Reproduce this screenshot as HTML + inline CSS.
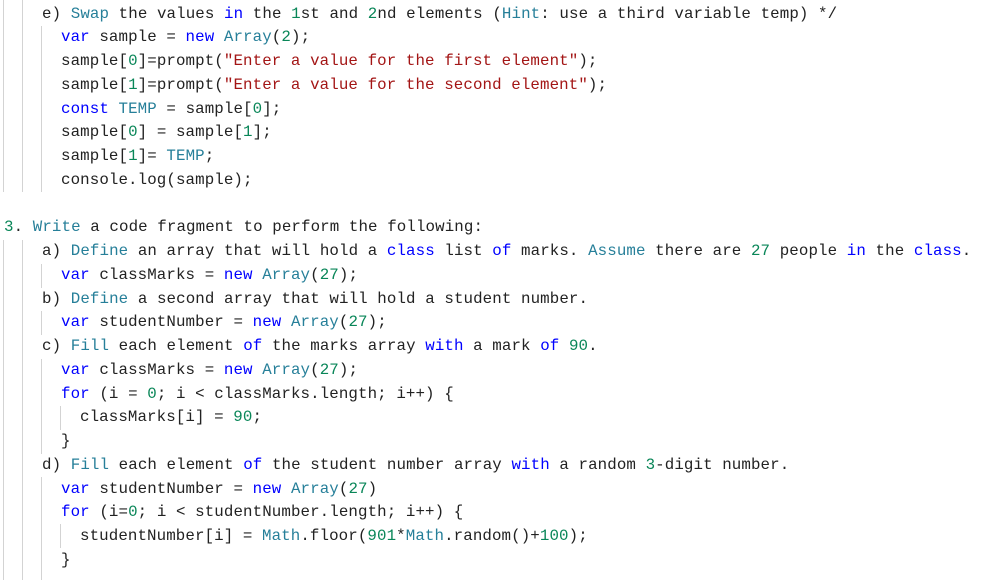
<!DOCTYPE html>
<html><head><meta charset="utf-8"><style>
body{margin:0;width:991px;height:580px;background:#fff;overflow:hidden;position:relative;font-family:"Liberation Mono",monospace;font-size:15.8px;color:#222}
#w{position:absolute;left:0;top:2.5px;width:991px;height:580px}
.l{position:absolute;white-space:pre;height:23.7px;line-height:23.7px;letter-spacing:0.1px}
.k{color:#0000ff}.t{color:#267f99}.n{color:#098658}.s{color:#a31515}
.g{position:absolute;width:1px;background:#d3d3d3}
</style></head><body>
<div class="g" style="left:3px;top:0;height:192px"></div>
<div class="g" style="left:22px;top:0;height:192px"></div>
<div class="g" style="left:41px;top:26px;height:166px"></div>
<div class="g" style="left:3px;top:240px;height:340px"></div>
<div class="g" style="left:22px;top:240px;height:340px"></div>
<div class="g" style="left:41px;top:264px;height:24px"></div>
<div class="g" style="left:41px;top:311px;height:24px"></div>
<div class="g" style="left:41px;top:359px;height:95px"></div>
<div class="g" style="left:41px;top:477px;height:103px"></div>
<div class="g" style="left:60px;top:406px;height:24px"></div>
<div class="g" style="left:60px;top:524px;height:24px"></div>
<div id="w">
<div class="l" style="top:0px;left:42px">e) <span class="t">Swap</span> the values <span class="k">in</span> the <span class="n">1</span>st and <span class="n">2</span>nd elements (<span class="t">Hint</span>: use a third variable temp) */</div>
<div class="l" style="top:23.75px;left:61px"><span class="k">var</span> sample = <span class="k">new</span> <span class="t">Array</span>(<span class="n">2</span>);</div>
<div class="l" style="top:47.5px;left:61px">sample[<span class="n">0</span>]=prompt(<span class="s">"Enter a value for the first element"</span>);</div>
<div class="l" style="top:71.25px;left:61px">sample[<span class="n">1</span>]=prompt(<span class="s">"Enter a value for the second element"</span>);</div>
<div class="l" style="top:95px;left:61px"><span class="k">const</span> <span class="t">TEMP</span> = sample[<span class="n">0</span>];</div>
<div class="l" style="top:118.75px;left:61px">sample[<span class="n">0</span>] = sample[<span class="n">1</span>];</div>
<div class="l" style="top:142.5px;left:61px">sample[<span class="n">1</span>]= <span class="t">TEMP</span>;</div>
<div class="l" style="top:166.25px;left:61px">console.log(sample);</div>
<div class="l" style="top:213.75px;left:4px"><span class="n">3</span>. <span class="t">Write</span> a code fragment to perform the following:</div>
<div class="l" style="top:237.5px;left:42px">a) <span class="t">Define</span> an array that will hold a <span class="k">class</span> list <span class="k">of</span> marks. <span class="t">Assume</span> there are <span class="n">27</span> people <span class="k">in</span> the <span class="k">class</span>.</div>
<div class="l" style="top:261.25px;left:61px"><span class="k">var</span> classMarks = <span class="k">new</span> <span class="t">Array</span>(<span class="n">27</span>);</div>
<div class="l" style="top:285px;left:42px">b) <span class="t">Define</span> a second array that will hold a student number.</div>
<div class="l" style="top:308.75px;left:61px"><span class="k">var</span> studentNumber = <span class="k">new</span> <span class="t">Array</span>(<span class="n">27</span>);</div>
<div class="l" style="top:332.5px;left:42px">c) <span class="t">Fill</span> each element <span class="k">of</span> the marks array <span class="k">with</span> a mark <span class="k">of</span> <span class="n">90</span>.</div>
<div class="l" style="top:356.25px;left:61px"><span class="k">var</span> classMarks = <span class="k">new</span> <span class="t">Array</span>(<span class="n">27</span>);</div>
<div class="l" style="top:380px;left:61px"><span class="k">for</span> (i = <span class="n">0</span>; i &lt; classMarks.length; i++) {</div>
<div class="l" style="top:403.75px;left:80px">classMarks[i] = <span class="n">90</span>;</div>
<div class="l" style="top:427.5px;left:61px">}</div>
<div class="l" style="top:451.25px;left:42px">d) <span class="t">Fill</span> each element <span class="k">of</span> the student number array <span class="k">with</span> a random <span class="n">3</span>-digit number.</div>
<div class="l" style="top:475px;left:61px"><span class="k">var</span> studentNumber = <span class="k">new</span> <span class="t">Array</span>(<span class="n">27</span>)</div>
<div class="l" style="top:498.75px;left:61px"><span class="k">for</span> (i=<span class="n">0</span>; i &lt; studentNumber.length; i++) {</div>
<div class="l" style="top:522.5px;left:80px">studentNumber[i] = <span class="t">Math</span>.floor(<span class="n">901</span>*<span class="t">Math</span>.random()+<span class="n">100</span>);</div>
<div class="l" style="top:546.25px;left:61px">}</div>
</div>
</body></html>
